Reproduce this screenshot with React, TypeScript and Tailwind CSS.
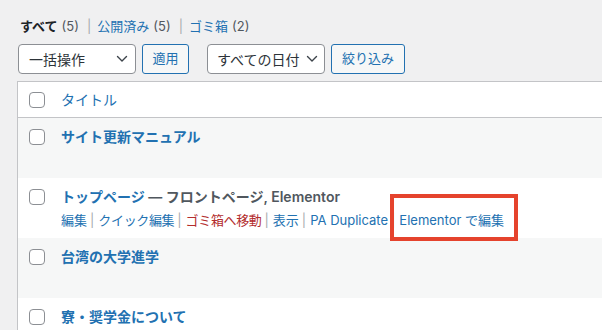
import React from "react";

const Chevron = () => (
  <svg width="12" height="8" viewBox="0 0 12 8" fill="none">
    <polyline points="1.5,1.5 6,6 10.5,1.5" stroke="#3c434a" strokeWidth="1.4" strokeLinecap="round" strokeLinejoin="round" />
  </svg>
);

const Checkbox = () => (
  <div className="w-4 h-4 rounded-[4px] border border-[#8c8f94] bg-white shrink-0" />
);

const Sep = () => <span className="text-[#a7aaad] ml-[3px] mr-[4px]">|</span>;
const ViewSep = () => <span className="text-[#a7aaad] ml-[8px] mr-[6px]">|</span>;

export default function App() {
  const rows = [
    { title: "サイト更新マニュアル", bg: "bg-[#f6f7f7]" },
    { title: "トップページ", bg: "bg-white", extra: " — フロントページ, Elementor", actions: true },
    { title: "台湾の大学進学", bg: "bg-[#f6f7f7]" },
    { title: "寮・奨学金について", bg: "bg-white" },
  ];
  return (
    <div className="w-[602px] h-[330px] overflow-hidden bg-[#f0f0f1] pl-[17px] font-[Inter,'Noto_Sans_CJK_JP',sans-serif] text-[13px] text-[#3c434a]">
      <div className="pt-[17px] pl-[3px] leading-[18px] flex items-center whitespace-nowrap">
        <span className="font-bold text-[#1d2327]">すべて</span>
        <span className="text-[#50575e] ml-[4px]">(5)</span>
        <ViewSep />
        <span className="text-[#2271b1]">公開済み</span>
        <span className="text-[#50575e] ml-[4px]">(5)</span>
        <ViewSep />
        <span className="text-[#2271b1]">ゴミ箱</span>
        <span className="text-[#50575e] ml-[4px]">(2)</span>
      </div>
      <div className="mt-[9px] flex items-center h-[30px] pl-[1px]">
        <div className="w-[118px] h-[30px] rounded-[4px] border border-[#8c8f94] bg-white flex items-center justify-between pl-[10px] pr-[7px] text-[14px] text-[#2c3338]">
          <span>一括操作</span>
          <Chevron />
        </div>
        <div className="ml-[6px] w-[47px] h-[30px] rounded-[3px] border border-[#2271b1] bg-[#f6f7f7] flex items-center justify-center text-[#2271b1]">
          適用
        </div>
        <div className="ml-[18px] w-[118px] h-[30px] rounded-[4px] border border-[#8c8f94] bg-white flex items-center justify-between pl-[9px] pr-[6px] text-[14px] text-[#2c3338]">
          <span>すべての日付</span>
          <Chevron />
        </div>
        <div className="ml-[6px] w-[74px] h-[30px] rounded-[3px] border border-[#2271b1] bg-[#f6f7f7] flex items-center justify-center text-[#2271b1]">
          絞り込み
        </div>
      </div>
      <div className="mt-[7px] border-l border-t border-[#c3c4c7] bg-white">
        <div className="h-[36px] flex items-center pl-[11px] border-b border-[#c3c4c7]">
          <Checkbox />
          <span className="ml-[16px] text-[14px] text-[#2271b1]">タイトル</span>
        </div>
        {rows.map((r, i) => (
          <div key={i} className={`h-[60px] ${r.bg} flex items-start pl-[11px] pt-[11px]`}>
            <Checkbox />
            <div className="ml-[16px] -mt-[2px] relative">
              <div className="leading-[20px] text-[14px] font-semibold whitespace-nowrap">
                <span className="text-[#2271b1]">{r.title}</span>
                {r.extra && <span className="text-[#50575e]">{r.extra}</span>}
              </div>
              {r.actions && (
                <div className="mt-[3px] leading-[20px] whitespace-nowrap flex items-center">
                  <span className="text-[#2271b1]">編集</span>
                  <Sep />
                  <span className="text-[#2271b1] tracking-[-0.35px]">クイック編集</span>
                  <Sep />
                  <span className="text-[#b32d2e] tracking-[-0.35px]">ゴミ箱へ移動</span>
                  <Sep />
                  <span className="text-[#2271b1]">表示</span>
                  <Sep />
                  <span className="text-[#2271b1]">PA Duplicate</span>
                  <Sep />
                  <span className="relative text-[#2271b1]">
                    Elementor で編集
                    <span className="absolute -left-[9px] -top-[16px] w-[128px] h-[47px] border-[4px] border-[#e5432d]" />
                  </span>
                </div>
              )}
            </div>
          </div>
        ))}
      </div>
    </div>
  );
}
